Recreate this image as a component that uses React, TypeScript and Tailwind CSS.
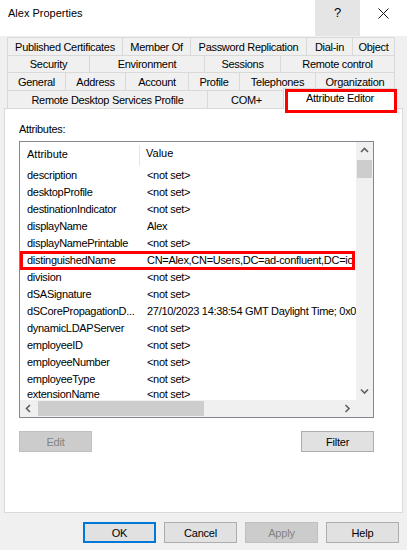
import type { ReactNode } from "react";

type Tab = { label: string; w: string };

const tabRows: Tab[][] = [
  [
    { label: "Published Certificates", w: "w-[115px]" },
    { label: "Member Of", w: "w-[68px]" },
    { label: "Password Replication", w: "w-[116px]" },
    { label: "Dial-in", w: "w-[46px]" },
    { label: "Object", w: "w-[43px]" },
  ],
  [
    { label: "Security", w: "w-[82px]" },
    { label: "Environment", w: "w-[115px]" },
    { label: "Sessions", w: "w-[76px]" },
    { label: "Remote control", w: "w-[115px]" },
  ],
  [
    { label: "General", w: "w-[58px]" },
    { label: "Address", w: "w-[60px]" },
    { label: "Account", w: "w-[63px]" },
    { label: "Profile", w: "w-[51px]" },
    { label: "Telephones", w: "w-[76px]" },
    { label: "Organization", w: "w-[80px]" },
  ],
];

const attrs: [string, string][] = [
  ["description", "<not set>"],
  ["desktopProfile", "<not set>"],
  ["destinationIndicator", "<not set>"],
  ["displayName", "Alex"],
  ["displayNamePrintable", "<not set>"],
  ["distinguishedName", "CN=Alex,CN=Users,DC=ad-confluent,DC=io"],
  ["division", "<not set>"],
  ["dSASignature", "<not set>"],
  ["dSCorePropagationD...", "27/10/2023 14:38:54 GMT Daylight Time; 0x0"],
  ["dynamicLDAPServer", "<not set>"],
  ["employeeID", "<not set>"],
  ["employeeNumber", "<not set>"],
  ["employeeType", "<not set>"],
  ["extensionName", "<not set>"],
];

function Chevron({ dir }: { dir: "up" | "down" | "left" | "right" }) {
  const pts = {
    up: "1,6 4.5,2.5 8,6",
    down: "1,2.5 4.5,6 8,2.5",
    left: "6,1 2.5,4.5 6,8",
    right: "2.5,1 6,4.5 2.5,8",
  }[dir];
  return (
    <svg width="9" height="9" viewBox="0 0 9 9">
      <polyline points={pts} fill="none" stroke="#606060" strokeWidth="1.6" />
    </svg>
  );
}

function Button({ children, disabled, primary, w = "w-[73px]" }: { children: ReactNode; disabled?: boolean; primary?: boolean; w?: string }) {
  const look = disabled
    ? "bg-[#cccccc] border border-[#bfbfbf] text-[#838383]"
    : primary
      ? "bg-[#e1e1e1] border-2 border-[#0078d7]"
      : "bg-[#e1e1e1] border border-[#adadad]";
  return (
    <div className={`${w} h-[21px] flex items-center justify-center ${look}`}>
      <span className="tracking-[-0.2px]">{children}</span>
    </div>
  );
}

function TitleBar() {
  return (
    <div className="h-[36px] bg-white flex items-start shrink-0">
      <span className="pl-[8px] pt-[6px] text-[11px] leading-[14px]">Alex Properties</span>
      <div className="ml-auto w-[45px] h-full bg-[#e5e5e5] flex justify-center pt-[5px]">
        <span className="text-[13px] leading-[16px]">?</span>
      </div>
      <div className="w-[47px] h-full flex justify-center pt-[8px]">
        <svg width="11" height="11" viewBox="0 0 11 11">
          <path d="M0.5 0.5 L10.5 10.5 M10.5 0.5 L0.5 10.5" stroke="#111" strokeWidth="1" />
        </svg>
      </div>
    </div>
  );
}

function Tabs() {
  return (
    <div className="ml-[3px] flex flex-col">
      {tabRows.map((row, ri) => (
        <div key={ri} className={`flex ${ri === 1 ? "h-[17px]" : "h-[18px]"}`}>
          {row.map((t, i) => (
            <div
              key={t.label}
              className={`${t.w} h-full flex items-center justify-center border-t border-l border-[#d9d9d9] whitespace-nowrap tracking-[-0.3px] ${i === row.length - 1 ? "border-r" : ""}`}
            >
              {t.label}
            </div>
          ))}
        </div>
      ))}
      <div className="flex items-end h-[18px]">
        <div className="w-[200px] h-full flex items-center justify-center border-t border-l border-[#d9d9d9] tracking-[-0.3px] whitespace-nowrap">
          Remote Desktop Services Profile
        </div>
        <div className="w-[78px] h-full flex items-center justify-center border-t border-l border-[#d9d9d9] tracking-[-0.3px]">
          COM+
        </div>
        <div className="relative z-10 -ml-[2px] -mb-px w-[114px] h-[21px] bg-white border-t border-x border-[#d9d9d9] flex justify-center pt-[2px] tracking-[-0.3px]">
          Attribute Editor
          <div className="absolute left-[1px] right-[-1px] top-0 h-[24px] border-[3px] border-[#ff0000]" />
        </div>
      </div>
    </div>
  );
}

function AttributeList() {
  return (
    <div className="w-[355px] h-[277px] border border-[#828790] grid grid-cols-[1fr_17px] grid-rows-[1fr_17px] bg-white">
      <div className="overflow-hidden flex flex-col">
        <div className="h-[24px] shrink-0 flex">
          <div className="w-[120px] pl-[7px] mt-[3px] pb-[3px] flex items-center border-r border-[#e5e5e5]">Attribute</div>
          <div className="pl-[6px] pb-[2px] flex items-center">Value</div>
        </div>
        {attrs.map(([name, value], i) => (
          <div
            key={name}
            className={`relative shrink-0 flex whitespace-nowrap ${i === attrs.length - 1 ? "h-[13px] items-start leading-[13px] pt-px" : "h-[17px] items-center"}`}
          >
            <div className="w-[120px] pl-[7px] shrink-0 tracking-[-0.3px]">{name}</div>
            <div className="pl-[7px] tracking-[-0.3px]">{value}</div>
            {name === "distinguishedName" && (
              <div className="absolute left-0 w-[335px] top-0 h-[19px] border-[3px] border-[#ff0000]" />
            )}
          </div>
        ))}
      </div>
      <div className="bg-[#f0f0f0] flex flex-col">
        <div className="h-[17px] flex items-center justify-center">
          <Chevron dir="up" />
        </div>
        <div className="h-[18px] mt-[1px] mx-[1px] bg-[#cdcdcd]" />
        <div className="mt-auto h-[17px] flex items-center justify-center">
          <Chevron dir="down" />
        </div>
      </div>
      <div className="bg-[#f0f0f0] flex items-center">
        <div className="w-[17px] h-full flex items-center justify-center">
          <Chevron dir="left" />
        </div>
        <div className="w-[166px] h-[15px] ml-[1px] bg-[#cdcdcd]" />
        <div className="ml-auto w-[17px] h-full flex items-center justify-center">
          <Chevron dir="right" />
        </div>
      </div>
      <div className="bg-[#f0f0f0]" />
    </div>
  );
}

function Panel() {
  return (
    <div className="h-[405px] bg-white border border-[#d9d9d9] flex flex-col pl-[14px] pt-[13px]">
      <div className="h-[14px] leading-[14px] tracking-[-0.3px]">Attributes:</div>
      <div className="mt-[5px]">
        <AttributeList />
      </div>
      <div className="mt-[13px] w-[355px] flex justify-between">
        <Button disabled>Edit</Button>
        <Button>Filter</Button>
      </div>
    </div>
  );
}

export default function App() {
  return (
    <div className="w-[407px] h-[550px] bg-[#f0f0f0] font-['Liberation_Sans',Arial,sans-serif] text-[11px] leading-[14px] text-black flex flex-col overflow-hidden">
      <TitleBar />
      <div className="flex flex-col px-[4px] mt-px">
        <Tabs />
        <Panel />
      </div>
      <div className="mt-[9px] flex justify-end gap-[8px] pr-[8px]">
        <Button primary>OK</Button>
        <Button>Cancel</Button>
        <Button disabled>Apply</Button>
        <Button>Help</Button>
      </div>
    </div>
  );
}
